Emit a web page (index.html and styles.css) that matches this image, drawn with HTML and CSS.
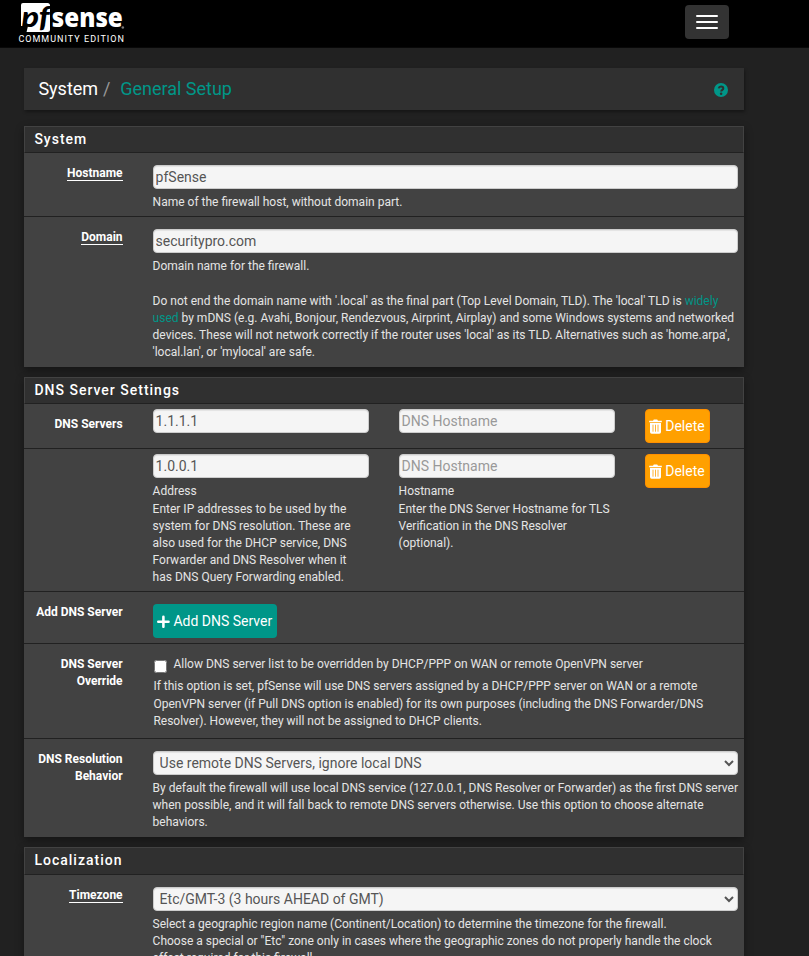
FILE: index.html
```html
<!DOCTYPE html>
<html lang="en">
<head>
<meta charset="utf-8">
<title>System: General Setup</title>
<link rel="stylesheet" href="styles.css">
</head>
<body>
<header class="navbar">
  <a class="brand">
    <svg class="logo" width="112" height="31" viewBox="0 0 112 31" role="img" aria-label="pfsense">
      <path d="M5 0H29.500Q32 0 32 2.500V26.500Q32 29 29.500 29H8.500L10 23H3V2Q3 0 5 0Z" fill="#fff"/>
      <text x="3.500" y="23.700" class="logo-pf" textLength="28" lengthAdjust="spacingAndGlyphs">pf</text>
      <text x="33.800" y="24" class="logo-sense" textLength="71" lengthAdjust="spacingAndGlyphs">sense</text>
      <circle cx="104.800" cy="24.500" r="1.300" fill="#777"/>
    </svg>
    <span class="edition">COMMUNITY EDITION</span>
  </a>
  <button class="toggle" aria-label="Menu"><i></i><i></i><i></i></button>
</header>

<main class="container">
  <div class="breadcrumb">
    <div><span>System</span><span class="slash">/</span><span class="current">General Setup</span></div>
    <svg class="help-icon" width="14" height="14" viewBox="0 0 14 14"><circle cx="7" cy="7" r="7" fill="#009688"/><path d="M4.700 5.400C5 4 5.900 3.600 7 3.600c1.300 0 2.300.7 2.300 1.800C9.300 6.900 7.200 6.900 7.200 8.500" fill="none" stroke="#303030" stroke-width="2"/><circle cx="7.100" cy="10.700" r="1.250" fill="#303030"/></svg>
  </div>

  <section class="panel">
    <h2>System</h2>
    <div class="row hostname">
      <label class="label required"><span>Hostname</span></label>
      <div class="field"><input class="control" value="pfSense"><p class="help">Name of the firewall host, without domain part.</p></div>
    </div>
    <div class="row domain">
      <label class="label required"><span>Domain</span></label>
      <div class="field"><input class="control" value="securitypro.com"><p class="help">Domain name for the firewall.<br><br>Do not end the domain name with '.local' as the final part (Top Level Domain, TLD). The 'local' TLD is <a>widely<br>used</a> by mDNS (e.g. Avahi, Bonjour, Rendezvous, Airprint, Airplay) and some Windows systems and networked<br>devices. These will not network correctly if the router uses 'local' as its TLD. Alternatives such as 'home.arpa',<br>'local.lan', or 'mylocal' are safe.</p></div>
    </div>
  </section>

  <section class="panel">
    <h2>DNS Server Settings</h2>
    <div class="row server first">
      <label class="label"><span>DNS Servers</span></label>
      <div class="field columns">
        <input class="control" value="1.1.1.1">
        <input class="control" placeholder="DNS Hostname">
        <button class="btn delete"><svg width="13" height="15" viewBox="0 0 13 15"><path d="M.2 1.700H4L4.800.500h3.400L9 1.700h3.800v1.600H.2zM1 4h11v9q0 1.700-1.700 1.700H2.700Q1 14.700 1 13z" fill="#fff"/><path d="M4 5.700v7M6.500 5.700v7M9 5.700v7" stroke="#ffa000" stroke-width=".8"/></svg>Delete</button>
      </div>
    </div>
    <div class="row server second">
      <label class="label"></label>
      <div class="field columns">
        <div><input class="control" value="1.0.0.1"><p class="help">Address<br>Enter IP addresses to be used by the<br>system for DNS resolution. These are<br>also used for the DHCP service, DNS<br>Forwarder and DNS Resolver when it<br>has DNS Query Forwarding enabled.</p></div>
        <div><input class="control" placeholder="DNS Hostname"><p class="help">Hostname<br>Enter the DNS Server Hostname for TLS<br>Verification in the DNS Resolver<br>(optional).</p></div>
        <button class="btn delete"><svg width="13" height="15" viewBox="0 0 13 15"><path d="M.2 1.700H4L4.800.500h3.400L9 1.700h3.800v1.600H.2zM1 4h11v9q0 1.700-1.700 1.700H2.700Q1 14.700 1 13z" fill="#fff"/><path d="M4 5.700v7M6.500 5.700v7M9 5.700v7" stroke="#ffa000" stroke-width=".8"/></svg>Delete</button>
      </div>
    </div>
    <div class="row add">
      <label class="label"><span>Add DNS Server</span></label>
      <div class="field"><button class="btn success"><svg width="13" height="13" viewBox="0 0 13 13"><path d="M6.500 1.700v10.200M1.300 6.800h10.400" stroke="#fff" stroke-width="2.600" stroke-linecap="round"/></svg>Add DNS Server</button></div>
    </div>
    <div class="row override">
      <label class="label"><span>DNS Server<br>Override</span></label>
      <div class="field"><label class="check"><input type="checkbox">Allow DNS server list to be overridden by DHCP/PPP on WAN or remote OpenVPN server</label><p class="help">If this option is set, pfSense will use DNS servers assigned by a DHCP/PPP server on WAN or a remote<br>OpenVPN server (if Pull DNS option is enabled) for its own purposes (including the DNS Forwarder/DNS<br>Resolver). However, they will not be assigned to DHCP clients.</p></div>
    </div>
    <div class="row behavior">
      <label class="label"><span>DNS Resolution<br>Behavior</span></label>
      <div class="field"><select class="control"><option>Use remote DNS Servers, ignore local DNS</option></select><p class="help">By default the firewall will use local DNS service (127.0.0.1, DNS Resolver or Forwarder) as the first DNS server<br>when possible, and it will fall back to remote DNS servers otherwise. Use this option to choose alternate<br>behaviors.</p></div>
    </div>
  </section>

  <section class="panel localization">
    <h2>Localization</h2>
    <div class="row">
      <label class="label required"><span>Timezone</span></label>
      <div class="field"><select class="control"><option>Etc/GMT-3 (3 hours AHEAD of GMT)</option></select><p class="help">Select a geographic region name (Continent/Location) to determine the timezone for the firewall.<br>Choose a special or "Etc" zone only in cases where the geographic zones do not properly handle the clock<br>effect required for this firewall.</p></div>
    </div>
  </section>
</main>
</body>
</html>
```
FILE: styles.css
```css
* { box-sizing: border-box; }
html { overflow: hidden; }
body { margin: 0; height: 956px; overflow: hidden; background: #212121; color: #fff; font: 12px/17.14px Roboto, sans-serif; }
button, input, select { font-family: inherit; }
.navbar { display: flex; justify-content: space-between; align-items: flex-start; height: 48px; padding: 0 80px 0 18px; background: #000; border-bottom: 1px solid #080808; }
.brand { display: flex; flex-direction: column; padding-top: 3px; }
.logo { display: block; overflow: visible; }
.logo-pf { font: italic 900 29px Lato, sans-serif; fill: #000; }
.logo-sense { font: 800 27px "Open Sans", sans-serif; fill: #fff; }
.edition { padding-left: 0.4px; font-size: 9px; line-height: 10px; letter-spacing: 1.02px; white-space: nowrap; }
.toggle { display: flex; flex-direction: column; gap: 4px; width: 44px; height: 34px; margin-top: 5px; padding: 10px 11px; border: 0; border-radius: 4px; background: #333; }
.toggle i { display: block; width: 22px; height: 2px; border-radius: 1px; background: #fff; }
.container { width: 720px; margin: 20px 0 0 24px; }
.breadcrumb { display: flex; align-items: center; justify-content: space-between; height: 42px; margin-bottom: 16px; padding: 0 15.6px 0 14.4px; background: #303030; box-shadow: 1px 2px 3px rgba(0,0,0,.35); font-size: 18px; line-height: 26px; }
.slash { color: #999; margin: 0 9.6px 0 5px; }
.current { color: #009688; }
.help-icon { margin-top: 2px; }
.panel { margin-bottom: 10px; background: #424242; box-shadow: 0 3px 8px rgba(0,0,0,.4); }
.panel h2 { height: 27px; margin: 0; padding: 0 9.4px; border: 1px solid #424242; border-bottom-color: #212121; background: #303030; font-size: 14px; font-weight: 500; line-height: 25px; letter-spacing: 1px; }
.localization h2 { height: 28px; }
.row { display: grid; grid-template-columns: 98.6px 585px; column-gap: 30px; padding-top: 12px; border-bottom: 1px solid #212121; }
.row:last-child { border-bottom: 0; }
.label { text-align: right; font-weight: 700; white-space: nowrap; }
.required span { display: inline-block; line-height: 14px; border-bottom: 1px solid #fff; }
.control { display: block; width: 100%; height: 24px; margin: 0; padding: 0 2px; border: 1px solid #ccc; border-radius: 4px; background: #f5f5f5; box-shadow: inset 0 1px 1px rgba(0,0,0,.075); color: #555; font-size: 14px; }
.control::placeholder { color: #999; opacity: 1; }
select.control { padding: 0 2px; }
.help { margin: 4.86px 0 0; color: #e5e5e5; white-space: nowrap; }
.help a { color: #009688; }
.hostname { height: 64px; }
.domain { height: 150px; }
.domain .help { margin-top: 5.31px; }
.server { padding-top: 5px; }
.first { height: 45px; }
.second { height: 143px; }
.second .help { margin-top: 5.42px; }
.first .label { padding-top: 7px; }
.columns { display: grid; grid-template-columns: 216px 216px 65px; column-gap: 30px; align-items: start; }
.btn { display: flex; align-items: center; gap: 3.6px; height: 34px; padding: 0 4px; border: 1px solid transparent; border-radius: 4px; color: #fff; font-size: 14px; white-space: nowrap; }
.delete { width: 65px; padding: 0 3px; background: #ffa000; border-color: #ff8f00; }
.success { width: 124px; padding: 0 3.4px; background: #009688; }
.add { height: 52px; }
.override { height: 95px; }
.check { display: flex; height: 17px; color: #e5e5e5; white-space: nowrap; }
.check input { flex: none; width: 13px; height: 13px; margin: 4px 6.8px 0 1px; }
.override .help { margin: 5.43px 0 0 0.8px; }
.behavior { height: 98px; }
```
